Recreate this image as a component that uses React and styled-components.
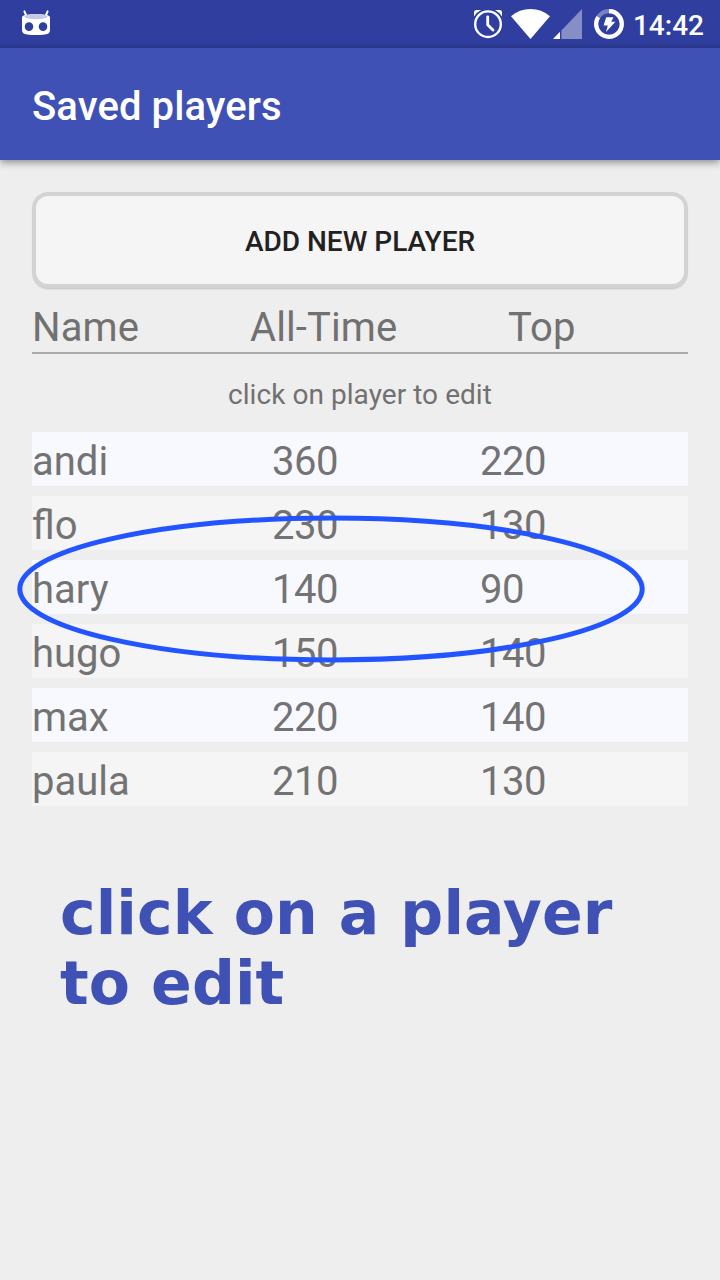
import React from 'react';
import styled, { createGlobalStyle } from 'styled-components';

const GlobalStyle = createGlobalStyle`
  body {
    margin: 0;
    background: #eeeeee;
    font-family: Roboto, sans-serif;
  }
`;

const Screen = styled.div`
  position: relative;
  display: flex;
  flex-direction: column;
  width: 720px;
  height: 1280px;
  overflow: hidden;
  background: #eeeeee;
`;

const StatusBar = styled.header`
  display: flex;
  align-items: center;
  justify-content: space-between;
  box-sizing: border-box;
  height: 48px;
  padding: 0 16px 0 21px;
  background: linear-gradient(#303f9f 0, #303f9f 41px, #2e3c98 44px, #28358a 48px);
`;

const StatusGroup = styled.div`
  display: flex;
  align-items: center;
`;

const StatusIcon = styled.svg`
  display: block;
  flex: none;
  margin-right: ${(p) => p.$gap || 0}px;
`;

const Clock = styled.time`
  color: #ffffff;
  font-size: 28px;
  font-weight: 500;
  line-height: 48px;
  padding-top: 2px;
  height: 46px;
`;

const AppBar = styled.div`
  position: relative;
  display: flex;
  align-items: center;
  height: 112px;
  padding-left: 32px;
  background: #3f51b5;
  box-shadow: 0 2px 8px rgba(0, 0, 0, 0.45);
  clip-path: inset(0 0 -20px 0);
`;

const Title = styled.h1`
  margin: 6px 0 0;
  color: #ffffff;
  font-size: 40px;
  font-weight: 500;
  letter-spacing: 0.1px;
  line-height: 48px;
`;

const Content = styled.main`
  display: flex;
  flex-direction: column;
  padding: 32px;
`;

const AddButton = styled.button`
  box-sizing: border-box;
  height: 96px;
  padding: 3px 0 0;
  border: 4px solid #d3d3d3;
  border-radius: 16px;
  background: #f5f5f5;
  box-shadow: 0 2px 2px -1px rgba(0, 0, 0, 0.2);
  color: #212121;
  font-family: inherit;
  font-size: 28px;
  font-weight: 500;
`;

const TableHead = styled.div`
  display: grid;
  grid-template-columns: 218px 258px 1fr;
  box-sizing: border-box;
  height: 66px;
  padding-top: 15px;
  border-bottom: 2px solid #a9a9a9;
  color: #717171;
  font-size: 40px;
  letter-spacing: 0.1px;
  line-height: 50px;
`;

const Hint = styled.p`
  margin: 22px 0 18px;
  color: #717171;
  font-size: 28px;
  letter-spacing: 0.05px;
  line-height: 38px;
  text-align: center;
`;

const PlayerList = styled.div`
  display: flex;
  flex-direction: column;
  gap: 10px;
`;

const PlayerRow = styled.div`
  display: grid;
  grid-template-columns: 240px 208px 1fr;
  box-sizing: border-box;
  height: 54px;
  padding-top: 5px;
  background: ${(p) => (p.$alternate ? '#f5f5f5' : '#f8f9ff')};
  color: #737373;
  font-size: 40px;
  line-height: 50px;
`;

const Score = styled.span`
  letter-spacing: -0.5px;
`;

const Instruction = styled.p`
  margin: 72px 0 0 28px;
  color: #3f51b5;
  font-family: 'DejaVu Sans', sans-serif;
  font-size: 60px;
  font-weight: 700;
  letter-spacing: 0.1px;
  line-height: 70px;
`;

const Highlight = styled.svg`
  position: absolute;
  left: 16px;
  top: 514px;
  pointer-events: none;
`;

const players = [
  { name: 'andi', allTime: 360, top: 220 },
  { name: 'flo', allTime: 230, top: 130 },
  { name: 'hary', allTime: 140, top: 90 },
  { name: 'hugo', allTime: 150, top: 140 },
  { name: 'max', allTime: 220, top: 140 },
  { name: 'paula', allTime: 210, top: 130 },
];

function RobotIcon() {
  return (
    <StatusIcon width="30" height="28" viewBox="0 0 30 28">
      <path d="M3.4 1.4 5.4 6M26.6 1.4 24.6 6" stroke="#fff" strokeWidth="2" strokeLinecap="round" />
      <path
        fill="#fff"
        fillRule="evenodd"
        d="M1 7.5Q1 5.5 5 5Q15 3 25 5Q29 5.5 29 7.5V20Q29 24 24 24.6Q15 25.6 6 24.6Q1 24 1 20ZM8 12.3a4.3 4.3 0 1 0 0 8.6a4.3 4.3 0 1 0 0-8.6ZM22 12.3a4.3 4.3 0 1 0 0 8.6a4.3 4.3 0 1 0 0-8.6Z"
      />
      <ellipse cx="15" cy="6.7" rx="11.6" ry="2.6" fill="#c5cae9" />
    </StatusIcon>
  );
}

function AlarmIcon() {
  return (
    <StatusIcon width="30" height="30" viewBox="0 0 30 30" $gap={8} fill="none" stroke="#fff">
      <circle cx="15" cy="15.2" r="12.8" strokeWidth="2.4" />
      <path d="M14.7 7.8V15.8L20 21" strokeWidth="2.8" strokeLinecap="round" />
      <path
        d="M1 7.4V3.4Q1 1 3.4 1H8Q3.8 3.2 1 7.4ZM29 7.4V3.4Q29 1 26.6 1H22Q26.2 3.2 29 7.4Z"
        fill="#fff"
        stroke="none"
      />
    </StatusIcon>
  );
}

function WifiIcon() {
  return (
    <StatusIcon width="39" height="30" viewBox="0 0 39 30" $gap={3}>
      <path fill="#fff" d="M0 7.2Q8.5 0 19.5 0T39 7.2L19.5 30Z" />
    </StatusIcon>
  );
}

function SignalIcon() {
  return (
    <StatusIcon width="29" height="30" viewBox="0 0 29 30" $gap={12}>
      <path fill="#868ec6" d="M8.4 21.5 29 0V30H8.4Z" />
      <path fill="#fff" d="M0 30 7 22.8V30Z" />
    </StatusIcon>
  );
}

function BatteryIcon() {
  return (
    <StatusIcon width="30" height="30" viewBox="0 0 30 30" $gap={9}>
      <circle cx="15" cy="15" r="12.8" fill="none" stroke="#7982bf" strokeWidth="4.2" />
      <path d="M15 2.2A12.8 12.8 0 1 1 4.2 8.1" fill="none" stroke="#fff" strokeWidth="4.2" />
      <path fill="#fff" d="M12.2 8.2H19.5L17.2 12.8H21.4L12 23L13.8 16.6H9.6Z" />
    </StatusIcon>
  );
}

export default function App() {
  return (
    <>
      <GlobalStyle />
      <Screen>
        <StatusBar>
          <RobotIcon />
          <StatusGroup>
            <AlarmIcon />
            <WifiIcon />
            <SignalIcon />
            <BatteryIcon />
            <Clock>14:42</Clock>
          </StatusGroup>
        </StatusBar>
        <AppBar>
          <Title>Saved players</Title>
        </AppBar>
        <Content>
          <AddButton type="button">ADD NEW PLAYER</AddButton>
          <TableHead>
            <span>Name</span>
            <span>All-Time</span>
            <span>Top</span>
          </TableHead>
          <Hint>click on player to edit</Hint>
          <PlayerList>
            {players.map((player, index) => (
              <PlayerRow key={player.name} $alternate={index % 2 === 1}>
                <span>{player.name}</span>
                <Score>{player.allTime}</Score>
                <Score>{player.top}</Score>
              </PlayerRow>
            ))}
          </PlayerList>
          <Instruction>
            click on a player
            <br />
            to edit
          </Instruction>
        </Content>
        <Highlight width="630" height="150" viewBox="0 0 630 150">
          <ellipse cx="315" cy="75" rx="311.2" ry="70.9" fill="none" stroke="#2255ff" strokeWidth="5" />
        </Highlight>
      </Screen>
    </>
  );
}
